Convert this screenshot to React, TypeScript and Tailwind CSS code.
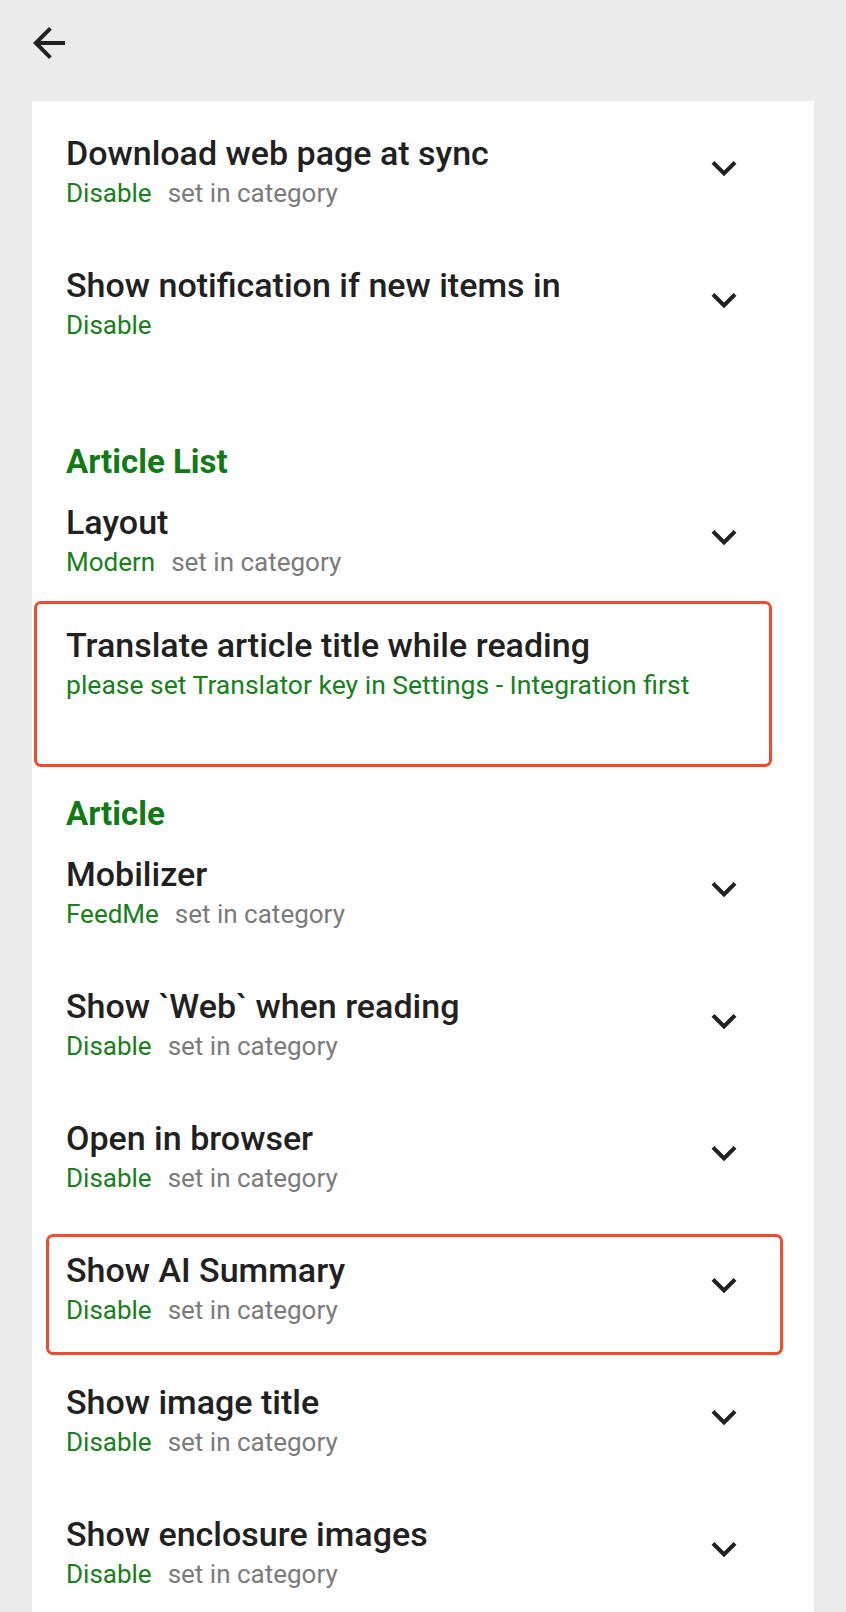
import React from 'react';

interface PrefRowProps {
  title: string;
  value?: string;
  note?: string;
  chevron?: boolean;
  className: string;
}

function ChevronDown() {
  return (
    <svg viewBox="0 0 24 24" className="w-[50px] h-[50px] fill-[#212121] shrink-0 mt-[10px]">
      <path d="M16.59 8.59L12 13.17 7.41 8.59 6 10l6 6 6-6z" />
    </svg>
  );
}

function PrefRow({ title, value, note, chevron = true, className }: PrefRowProps) {
  return (
    <div className={`flex items-start justify-between ${className}`}>
      <div className="flex flex-col">
        <div className="text-[34px] leading-[40px] font-medium text-[#212121]">{title}</div>
        <div className="mt-[5px] flex gap-[16px] text-[26px] leading-[30px]">
          {value && <span className="text-[#17801b]">{value}</span>}
          {note && <span className="text-[#7b7b7b]">{note}</span>}
        </div>
      </div>
      {chevron && <ChevronDown />}
    </div>
  );
}

function SectionHeader({ label }: { label: string }) {
  return <div className="h-[40px] text-[33px] leading-[40px] font-bold text-[#117a16]">{label}</div>;
}

export default function App() {
  return (
    <div className="relative min-h-[1612px] h-[1612px] overflow-hidden bg-[#ebebeb] font-['Roboto',sans-serif]">
      {/* top bar */}
      <div className="h-[101px] pl-[25px] pt-[19px]">
        <svg viewBox="0 0 24 24" className="w-[48px] h-[48px] fill-[#212121]">
          <path d="M20 11H7.83l5.59-5.59L12 4l-8 8 8 8 1.41-1.41L7.83 13H20v-2z" />
        </svg>
      </div>

      <div className="ml-[32px] w-[782px] bg-white pl-[34px] pr-[65px]">
        <PrefRow title="Download web page at sync" value="Disable" note="set in category" className="h-[132px] pt-[32px]" />
        <PrefRow title="Show notification if new items in" value="Disable" className="h-[132px] pt-[32px]" />

        <div className="mt-[77px]">
          <SectionHeader label="Article List" />
        </div>
        <PrefRow title="Layout" value="Modern" note="set in category" className="h-[111px] pt-[20px]" />
        <div className="h-[201px] pt-[32px]">
          <div className="text-[34px] leading-[40px] font-medium text-[#212121]">Translate article title while reading</div>
          <div className="mt-[5px] text-[26.5px] leading-[30px] text-[#17801b]">
            please set Translator key in Settings - Integration first
          </div>
        </div>

        <SectionHeader label="Article" />
        <PrefRow title="Mobilizer" value="FeedMe" note="set in category" className="h-[120px] pt-[20px]" />
        <PrefRow title="Show `Web` when reading" value="Disable" note="set in category" className="h-[132px] pt-[32px]" />
        <PrefRow title="Open in browser" value="Disable" note="set in category" className="h-[132px] pt-[32px]" />
        <PrefRow title="Show AI Summary" value="Disable" note="set in category" className="h-[132px] pt-[32px]" />
        <PrefRow title="Show image title" value="Disable" note="set in category" className="h-[132px] pt-[32px]" />
        <PrefRow title="Show enclosure images" value="Disable" note="set in category" className="h-[132px] pt-[32px]" />
      </div>

      {/* highlight annotations */}
      <div className="pointer-events-none absolute left-[34px] top-[601px] w-[738px] h-[166px] rounded-[7px] border-[3.5px] border-[#f24a2a]" />
      <div className="pointer-events-none absolute left-[46px] top-[1234px] w-[737px] h-[121px] rounded-[7px] border-[3.5px] border-[#f24a2a]" />
    </div>
  );
}
